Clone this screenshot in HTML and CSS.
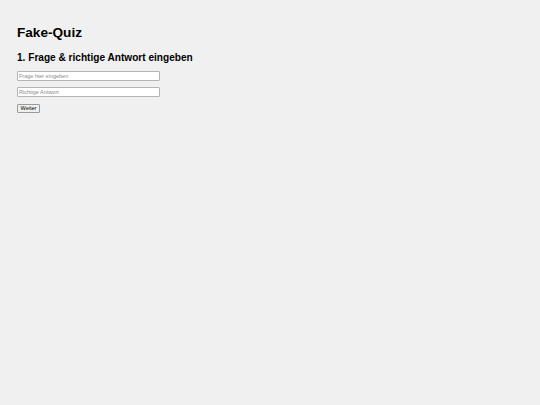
FILE: index.html
```html
<!DOCTYPE html>
<html lang="de">
<head>
<meta charset="utf-8">
<title>Fake-Quiz</title>
<link rel="stylesheet" href="styles.css">
</head>
<body>
<main class="page">
  <h1 class="title">Fake-Quiz</h1>
  <h2 class="step">1. Frage &amp; richtige Antwort eingeben</h2>
  <form class="form">
    <input class="field" type="text" placeholder="Frage hier eingeben">
    <input class="field" type="text" placeholder="Richtige Antwort">
    <button class="btn" type="button">Weiter</button>
  </form>
</main>
</body>
</html>
```

FILE: styles.css
```css
html, body {
  margin: 0;
  padding: 0;
  background: #f0f0f0;
}
body {
  font-family: "Liberation Sans", Arial, sans-serif;
  color: #000;
}
.page {
  padding: 24px 17px;
}
.title {
  font-size: 13.6px;
  font-weight: bold;
  margin: 0 0 10px 0;
  line-height: 17px;
}
.step {
  font-size: 10.1px;
  font-weight: bold;
  margin: 0 0 7px 0;
  line-height: 13px;
}
.form {
  display: flex;
  flex-direction: column;
  align-items: flex-start;
  gap: 6px;
}
.field {
  width: 143px;
  height: 10px;
  box-sizing: border-box;
  margin: 0;
  padding: 0 1px;
  border: 1px solid #b4b4b4;
  border-radius: 1px;
  background: #fff;
  font-family: "Liberation Sans", Arial, sans-serif;
  font-size: 5.5px;
  line-height: 8px;
  color: #000;
}
.field::placeholder {
  color: #8a8a8a;
}
.btn {
  margin-top: 1px;
  height: 9px;
  width: 23px;
  padding: 0;
  box-sizing: border-box;
  border: 1px solid #9a9a9a;
  border-radius: 1px;
  background: #efefef;
  font-family: "Liberation Sans", Arial, sans-serif;
  font-size: 5.5px;
  line-height: 7px;
  color: #000;
}
```
